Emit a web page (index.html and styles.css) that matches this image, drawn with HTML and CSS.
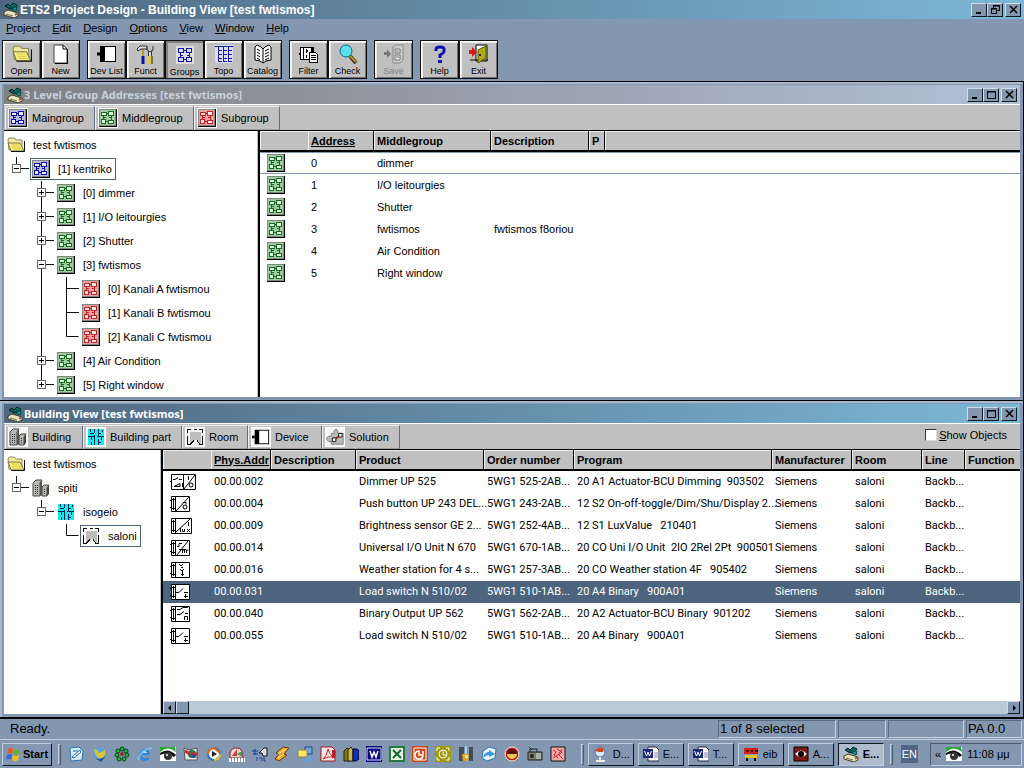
FILE: index.html
```html
<!DOCTYPE html>
<html lang="en">
<head>
<meta charset="utf-8">
<title>ETS2 Project Design - Building View [test fwtismos]</title>
<link rel="stylesheet" href="styles.css">
</head>
<body>
<svg class="defs" aria-hidden="true">
  <symbol id="app" viewBox="0 0 16 16"><path d="M1 10l4-2 10 3v3l-4 2-10-3z" fill="#e8e4c0" stroke="#403c20"/><path d="M3 12l7 2M12 12l2-1" stroke="#77735a"/><path d="M2 4l3-2 2 2 3-3 4 2-2 3-5 1z" fill="#086868" stroke="#022"/><path d="M6 5h5M9 7l4 2 1-4" fill="#18a0a0" stroke="#044"/><path d="M12 13l2-1" stroke="#c00"/></symbol>
  <symbol id="group" viewBox="0 0 18 18" shape-rendering="crispEdges"><path d="M0 0h18v18H0z" fill="#000"/><path d="M0 0h17v17H0z" fill="#808880"/><path d="M1 1h15v15H1z" fill="var(--tint)"/><path d="M2.500 3.500h5v3h-5zM9.500 2.500h5v4h-5zM2.500 10.500h4v4h-4zM9.500 11.500h5v3h-5z" fill="var(--pale)" stroke="currentColor"/><path d="M7 4.500h3M7 12.500h3M4.500 7v4M12.500 7v5M5 8.500h2M10 8.500h2" stroke="currentColor" fill="none"/></symbol>
  <symbol id="folder" viewBox="0 0 18 16"><path d="M1 3l1-2h5l2 2h6v10H2z" fill="#f4ec9c" stroke="#8c8860"/><path d="M1 6h12l4 8H4z" fill="#f8f080" stroke="#77734a"/><path d="M4 14.500h13.500V4" stroke="#111" fill="none"/><path d="M4 8h8M5 10h9M6 12h9" stroke="#d8cc40"/></symbol>
  <symbol id="building" viewBox="0 0 18 18"><path d="M1 4l3-3h6l-2 3v13H1z" fill="#b8b8b0" stroke="#444"/><path d="M8 4l2-3v15l-2 1z" fill="#555"/><path d="M10 8l2-2h5l-2 3v8h-5z" fill="#b8b8b0" stroke="#444"/><path d="M15 9l2-3v9l-2 2z" fill="#444"/><path d="M3.500 6v10M5.500 6v10M12.500 10v6" stroke="#333" stroke-dasharray="1 1"/></symbol>
  <symbol id="part" viewBox="0 0 18 18" shape-rendering="crispEdges"><path d="M1 1h16v16H1z" fill="#18e8f0"/><path d="M1 8.500h6M10 8.500h7M7.500 1v4M7.500 7v10M11.500 1v7M11.500 11v6M3 5.500h4M11 5.500h3M4.500 9v3M4.500 14v3M14.500 8v4M11 14.500h3M3.500 1v3M15.500 2v2" stroke="#024" fill="none"/></symbol>
  <symbol id="room" viewBox="0 0 18 18" shape-rendering="crispEdges"><path d="M4 4h11v12l-5-4-5 4H4z" fill="#bdbdbd"/><path d="M1.500 5V1.500H5M8 1.500h3M13 1.500h3.500V5M1.500 8v8.500H4l4-4M16.500 8v8.500H14l-3-4" fill="none" stroke="#111"/></symbol>
  <symbol id="device" viewBox="0 0 20 18"><path d="M3 1h16v16H3z" fill="#000"/><path d="M8 2h10v14H8z" fill="#fff"/><path d="M0 9h3" stroke="#000" stroke-width="3"/></symbol>
  <symbol id="solution" viewBox="0 0 20 18"><path d="M6 5h3V2l2-2 2 2v3h6v12H6v-3H3l-3-3 3-3h3z" fill="#bbb" stroke="#777"/><path d="M9 12l7-5" stroke="#c01818" stroke-width="2"/><path d="M7 10h4v4H7zM14 5h4v4h-4z" fill="#eee" stroke="#111"/></symbol>
  <symbol id="new" viewBox="0 0 20 20"><path d="M3 1h9l4 4v14H3z" fill="#fff" stroke="#444"/><path d="M12 1v4h4M16.500 5v14.500H4" fill="none" stroke="#000"/></symbol>
  <symbol id="funct" viewBox="0 0 20 20"><path d="M7 5v9" stroke="#b89838" stroke-width="2"/><path d="M1 5l3-3h7v3H5L2 7z" fill="#ddd" stroke="#333"/><path d="M14 7v6" stroke="#ddd" stroke-width="2"/><path d="M11 3v3l3 2 3-2V2M12.500 7v5M15.500 7v5" fill="none" stroke="#333"/><path d="M7 12v8" stroke="#1010a0" stroke-width="3"/><path d="M14 12v8" stroke="#f0c818" stroke-width="3"/><path d="M16 12v8" stroke="#222"/></symbol>
  <symbol id="groups" viewBox="0 0 20 20" shape-rendering="crispEdges"><path d="M1 1h18v18H1z" fill="#ddd"/><path d="M3.500 3.500h5v4h-5zM11.500 3.500h5v4h-5zM3.500 12.500h5v4h-5zM11.500 12.500h5v4h-5zM8 5.500h4M8 14.500h4M5.500 7v6M14.500 7v6M6 10.500h2M12 10.500h2" fill="none" stroke="#1010b0"/></symbol>
  <symbol id="topo" viewBox="0 0 20 20" shape-rendering="crispEdges"><path d="M1 1h18v18H1z" fill="#dcdcf4"/><path d="M1 2.500h18M4.500 3v15M9.500 3v15M14.500 3v15M5 6.500h3M5 10.500h3M5 14.500h3M10 6.500h3M10 10.500h3M10 14.500h3M15 6.500h3M15 10.500h3M15 14.500h3M5 17.500h3M10 17.500h3M15 17.500h3" stroke="#1818a8"/></symbol>
  <symbol id="catalog" viewBox="0 0 20 20"><path d="M2 3l2-2 4 2 2 2 2-2 4-2 2 2v13l-5 1-3 2-3-2-5-1z" fill="#fff" stroke="#000"/><path d="M10 5v14M4 5l3 2M4 8l3 2M4 11l3 2M4 14l3 2M12 7l4-2M12 10l4-2M12 13l4-2M12 16l4-2" stroke="#000"/></symbol>
  <symbol id="filter" viewBox="0 0 20 20" shape-rendering="crispEdges"><path d="M1.500 3.500h13v12h-13z" fill="#fff" stroke="#000"/><path d="M0 9h2v2H0zM12 4h3v4h-3z"/><path d="M4.500 3v13M7.500 5v4M8.500 6v2M7.500 11v3" stroke="#000"/><path d="M10.500 8.500h6l2 2v8h-8z" fill="#fff" stroke="#000"/><path d="M12 11.500h5M12 13.500h5M12 15.500h5" stroke="#000"/></symbol>
  <symbol id="check" viewBox="0 0 20 20"><path d="M12 12l6 7" stroke="#332" stroke-width="4"/><path d="M12 12l6 6" stroke="#b09828" stroke-width="2"/><circle cx="8" cy="7" r="6" fill="#58e0ec" stroke="#168"/></symbol>
  <symbol id="save" viewBox="0 0 20 20"><path d="M0 8h3V5l4 5-4 4v-3H0z" fill="#777"/><path d="M9 3l3-2h7v15l-3 3H9z" fill="#ccc" stroke="#888"/><path d="M11 5h5v4h-5zM11 11h5v5h-5zM12 7h3M12 13h3" stroke="#777" fill="#eee"/></symbol>
  <symbol id="help" viewBox="0 0 20 20"><path d="M6 7V5q0-2 4-2t4 2v2q0 2-4 4v3" fill="none" stroke="#1010b0" stroke-width="3"/><path d="M8 16h4v3H8z" fill="#1010b0"/></symbol>
  <symbol id="exit" viewBox="0 0 20 20"><path d="M7 1h11v16H7z" fill="#fff" stroke="#000"/><path d="M1 16h18" stroke="#000"/><path d="M9 6l8-4v12l-8 5z" fill="#b0a818" stroke="#555008"/><circle cx="11" cy="11" r="1"/><path d="M0 6h3V3l5 5-5 5v-3H0z" fill="#d81818"/></symbol>

  <symbol id="d-dim" viewBox="0 0 26 18"><path d="M1.500 1.500h24v15h-24z" fill="#fff" stroke="#000"/><g fill="none" stroke="#000"><path d="M13.500 1.500v15M0 8.500h1.500M14 16L25 2M3 6.500h2l3-2M9 6.500h3M4 13.500h6v-3zM18.500 3v4M12.500 10v4"/><circle cx="21" cy="12" r="2"/></g></symbol>
  <symbol id="d-base" viewBox="0 0 20 18"><path d="M1.500 1.500h18v15h-18z" fill="#fff" stroke="#000"/><path d="M5.500 1.500v15M0 5.500h2M0 12.500h2M3.500 3v12M2 4.500h3M2 13.500h3" stroke="#000"/></symbol>
  <symbol id="d-push" viewBox="0 0 20 18"><use href="#d-base"/><g fill="none" stroke="#000"><path d="M6 16L19 2M13 7.500h3v2"/><circle cx="15" cy="12" r="2"/></g></symbol>
  <symbol id="d-lux" viewBox="0 0 22 18"><path d="M1.500 1.500h20v15h-20z" fill="#fff" stroke="#000"/><path d="M5.500 1.500v15M3.500 3v12M2 4.500h3M2 13.500h3M6 15L20 2M18.500 5v4M10.500 11v4M12.500 12v2.500h2V12M17 12l3 3M20 12l-3 3" fill="none" stroke="#000"/></symbol>
  <symbol id="d-uni" viewBox="0 0 20 18"><use href="#d-base"/><path d="M7 16L18 2M7 7.500h2v-3h3M12.500 14v-3h2v3M16.500 14v-3h2M9 10.500h7" fill="none" stroke="#000"/></symbol>
  <symbol id="d-wea" viewBox="0 0 20 18"><use href="#d-base"/><path d="M9 3l2 2 2-2M11 6.500h2M10 8l2 2 2-2M12.500 10v5M11 13.500h3" fill="none" stroke="#000"/></symbol>
  <symbol id="d-load" viewBox="0 0 20 18"><use href="#d-base"/><path d="M6 9.500h3l4-4M14 9.500h4M15.500 11v4M14 13.500h4" fill="none" stroke="#000"/></symbol>
  <symbol id="d-bin" viewBox="0 0 20 18"><use href="#d-base"/><path d="M7 4.500h3l3-2h5M7 9.500h3l4-3M15 8.500h3M14.500 15v-3.500h3V15" fill="none" stroke="#000"/></symbol>

  <symbol id="t-root" viewBox="0 0 25 24" shape-rendering="crispEdges"><path d="M11.500 0v7M16 11.500h8" stroke="#111"/><path d="M7.500 7.500h8v8h-8z" fill="#fff" stroke="#666"/><path d="M9 11.500h5" stroke="#000"/></symbol>
  <symbol id="t-plus" viewBox="0 0 25 24" shape-rendering="crispEdges"><path d="M11.500 0v24M16 11.500h8" stroke="#111"/><path d="M7.500 7.500h8v8h-8z" fill="#fff" stroke="#666"/><path d="M9 11.500h5M11.500 9v5" stroke="#000"/></symbol>
  <symbol id="t-minus" viewBox="0 0 25 24" shape-rendering="crispEdges"><path d="M11.500 0v24M16 11.500h8" stroke="#111"/><path d="M7.500 7.500h8v8h-8z" fill="#fff" stroke="#666"/><path d="M9 11.500h5" stroke="#000"/></symbol>
  <symbol id="t-last" viewBox="0 0 25 24" shape-rendering="crispEdges"><path d="M11.500 0v7M16 11.500h8" stroke="#111"/><path d="M7.500 7.500h8v8h-8z" fill="#fff" stroke="#666"/><path d="M9 11.500h5M11.500 9v5" stroke="#000"/></symbol>
  <symbol id="t-bar" viewBox="0 0 25 24"><path d="M11.500 0v24" stroke="#111"/></symbol>
  <symbol id="t-tee" viewBox="0 0 25 24"><path d="M11.500 0v24M12 11.500h12" stroke="#111"/></symbol>
  <symbol id="t-end" viewBox="0 0 25 24"><path d="M11.500 0v11.500h12" stroke="#111" fill="none"/></symbol>

  <symbol id="w-min" viewBox="0 0 11 10"><path d="M2 8h5" stroke="#000" stroke-width="2"/></symbol>
  <symbol id="w-max" viewBox="0 0 11 10"><path d="M1.500 1.500h8v7h-8zM1 2h9" fill="none" stroke="#000"/></symbol>
  <symbol id="w-res" viewBox="0 0 11 10"><path d="M3.500 3V.500h6v5H7M3 1h7M1.500 3.500h5v5h-5zM1 4h6" fill="none" stroke="#000"/></symbol>
  <symbol id="w-close" viewBox="0 0 11 10"><path d="M2 1l7 7M9 1L2 8" stroke="#000" stroke-width="1.500"/></symbol>

  <symbol id="winflag" viewBox="0 0 16 16"><path d="M3 3q3-2 5 0L7 8Q4 6 2 8z" fill="#e85828"/><path d="M9 3q3 2 6 0l-1 5q-3 2-6 0z" fill="#68b030"/><path d="M2 9q2-2 5 0l-1 5q-3-2-5 0z" fill="#3868d8"/><path d="M8 9q3 2 6 0l-1 5q-3 2-6 0z" fill="#f0c020"/></symbol>
  <symbol id="eye" viewBox="0 0 16 16"><path d="M0 1h16v14H0z" fill="#fff"/><path d="M0 6q8-7 16 0l-1-5H0z" fill="#28a838"/><path d="M0 7q8-6 16 2l-2 2Q7 5 0 9z" fill="#111"/><circle cx="8" cy="10" r="4" fill="#333"/><circle cx="7" cy="9" r="1" fill="#fff"/></symbol>
  <symbol id="word" viewBox="0 0 16 16"><path d="M5 1h8l3 3v11H5z" fill="#fff" stroke="#224"/><path d="M11 7h4M11 9h4M11 11h4" stroke="#88a"/><path d="M0 3h10v9H0z" fill="#18287c"/><path d="M1.500 5l2 5L5 6l1.500 4 2-5" fill="none" stroke="#fff"/></symbol>
</svg>

<header class="titlebar active main">
  <svg class="i16"><use href="#app"/></svg>
  <h1>ETS2 Project Design - Building View [test fwtismos]</h1>
  <div class="controls">
    <button aria-label="Minimize"><svg><use href="#w-min"/></svg></button><button aria-label="Restore"><svg><use href="#w-res"/></svg></button><button class="close" aria-label="Close"><svg><use href="#w-close"/></svg></button>
  </div>
</header>
<nav class="menu">
  <a href="#"><u>P</u>roject</a><a href="#"><u>E</u>dit</a><a href="#"><u>D</u>esign</a><a href="#"><u>O</u>ptions</a><a href="#"><u>V</u>iew</a><a href="#"><u>W</u>indow</a><a href="#"><u>H</u>elp</a>
</nav>
<div class="toolbar">
  <div><button><svg><use href="#folder"/></svg>Open</button><button><svg><use href="#new"/></svg>New</button></div>
  <div><button><svg><use href="#device"/></svg>Dev List</button><button><svg><use href="#funct"/></svg>Funct</button><button class="pressed"><svg><use href="#groups"/></svg>Groups</button><button><svg><use href="#topo"/></svg>Topo</button><button><svg><use href="#catalog"/></svg>Catalog</button></div>
  <div><button><svg><use href="#filter"/></svg>Filter</button><button><svg><use href="#check"/></svg>Check</button></div>
  <div><button disabled><svg><use href="#save"/></svg>Save</button></div>
  <div><button><svg><use href="#help"/></svg>Help</button><button><svg><use href="#exit"/></svg>Exit</button></div>
</div>

<main class="workspace">
  <section class="window">
    <header class="titlebar inactive">
      <svg class="i16"><use href="#app"/></svg>
      <h2>3 Level Group Addresses [test fwtismos]</h2>
      <div class="controls"><button aria-label="Minimize"><svg><use href="#w-min"/></svg></button><button aria-label="Maximize"><svg><use href="#w-max"/></svg></button><button class="close" aria-label="Close"><svg><use href="#w-close"/></svg></button></div>
    </header>
    <div class="subbar">
      <button class="w90"><svg class="blue"><use href="#group"/></svg>Maingroup</button>
      <button class="w98"><svg class="green"><use href="#group"/></svg>Middlegroup</button>
      <button class="w86"><svg class="red"><use href="#group"/></svg>Subgroup</button>
    </div>
    <div class="panes groups">
      <ul class="tree">
        <li><span class="node"><svg><use href="#folder"/></svg>test fwtismos</span></li>
        <li><svg class="g"><use href="#t-root"/></svg><span class="node sel"><svg class="blue"><use href="#group"/></svg>[1] kentriko</span></li>
        <li><i></i><svg class="g"><use href="#t-plus"/></svg><span class="node"><svg class="green"><use href="#group"/></svg>[0] dimmer</span></li>
        <li><i></i><svg class="g"><use href="#t-plus"/></svg><span class="node"><svg class="green"><use href="#group"/></svg>[1] I/O leitourgies</span></li>
        <li><i></i><svg class="g"><use href="#t-plus"/></svg><span class="node"><svg class="green"><use href="#group"/></svg>[2] Shutter</span></li>
        <li><i></i><svg class="g"><use href="#t-minus"/></svg><span class="node"><svg class="green"><use href="#group"/></svg>[3] fwtismos</span></li>
        <li><i></i><svg class="g"><use href="#t-bar"/></svg><svg class="g"><use href="#t-tee"/></svg><span class="node"><svg class="red"><use href="#group"/></svg>[0] Kanali A fwtismou</span></li>
        <li><i></i><svg class="g"><use href="#t-bar"/></svg><svg class="g"><use href="#t-tee"/></svg><span class="node"><svg class="red"><use href="#group"/></svg>[1] Kanali B fwtismou</span></li>
        <li><i></i><svg class="g"><use href="#t-bar"/></svg><svg class="g"><use href="#t-end"/></svg><span class="node"><svg class="red"><use href="#group"/></svg>[2] Kanali C fwtismou</span></li>
        <li><i></i><svg class="g"><use href="#t-plus"/></svg><span class="node"><svg class="green"><use href="#group"/></svg>[4] Air Condition</span></li>
        <li><i></i><svg class="g"><use href="#t-last"/></svg><span class="node"><svg class="green"><use href="#group"/></svg>[5] Right window</span></li>
      </ul>
      <div class="list">
        <table>
          <colgroup><col class="c48"><col class="c66"><col class="c117"><col class="c97"><col class="c16"><col></colgroup>
          <thead><tr><th class="open"></th><th><u>Address</u></th><th>Middlegroup</th><th>Description</th><th>P</th><th class="open"></th></tr></thead>
          <tbody>
            <tr class="focus"><td><svg class="green"><use href="#group"/></svg></td><td>0</td><td>dimmer</td><td></td><td></td><td></td></tr>
            <tr><td><svg class="green"><use href="#group"/></svg></td><td>1</td><td>I/O leitourgies</td><td></td><td></td><td></td></tr>
            <tr><td><svg class="green"><use href="#group"/></svg></td><td>2</td><td>Shutter</td><td></td><td></td><td></td></tr>
            <tr><td><svg class="green"><use href="#group"/></svg></td><td>3</td><td>fwtismos</td><td>fwtismos f8oriou</td><td></td><td></td></tr>
            <tr><td><svg class="green"><use href="#group"/></svg></td><td>4</td><td>Air Condition</td><td></td><td></td><td></td></tr>
            <tr><td><svg class="green"><use href="#group"/></svg></td><td>5</td><td>Right window</td><td></td><td></td><td></td></tr>
          </tbody>
        </table>
      </div>
    </div>
  </section>

  <section class="window">
    <header class="titlebar active">
      <svg class="i16"><use href="#app"/></svg>
      <h2>Building View [test fwtismos]</h2>
      <div class="controls"><button aria-label="Minimize"><svg><use href="#w-min"/></svg></button><button aria-label="Maximize"><svg><use href="#w-max"/></svg></button><button class="close" aria-label="Close"><svg><use href="#w-close"/></svg></button></div>
    </header>
    <div class="subbar">
      <button class="w78"><svg><use href="#building"/></svg>Building</button>
      <button class="w98"><svg><use href="#part"/></svg>Building part</button>
      <button class="w66"><svg><use href="#room"/></svg>Room</button>
      <button class="w74"><svg><use href="#device"/></svg>Device</button>
      <button class="w78"><svg><use href="#solution"/></svg>Solution</button>
      <label class="show"><input type="checkbox"><span><u>S</u>how Objects</span></label>
    </div>
    <div class="panes building">
      <ul class="tree">
        <li><span class="node"><svg><use href="#folder"/></svg>test fwtismos</span></li>
        <li><svg class="g"><use href="#t-root"/></svg><span class="node"><svg><use href="#building"/></svg>spiti</span></li>
        <li><i></i><svg class="g"><use href="#t-root"/></svg><span class="node"><svg><use href="#part"/></svg>isogeio</span></li>
        <li><i></i><i></i><svg class="g"><use href="#t-end"/></svg><span class="node sel"><svg><use href="#room"/></svg>saloni</span></li>
      </ul>
      <div class="list">
        <table>
          <colgroup><col class="c48"><col class="c60"><col class="c85"><col class="c128"><col class="c90"><col class="c198"><col class="c80"><col class="c70"><col class="c43"><col></colgroup>
          <thead><tr><th class="open"></th><th><u>Phys.Addr</u></th><th>Description</th><th>Product</th><th>Order number</th><th>Program</th><th>Manufacturer</th><th>Room</th><th>Line</th><th class="open">Function</th></tr></thead>
          <tbody>
            <tr><td><svg class="d26"><use href="#d-dim"/></svg></td><td>00.00.002</td><td></td><td>Dimmer UP 525</td><td>5WG1 525-2AB...</td><td>20 A1 Actuator-BCU Dimming  903502</td><td>Siemens</td><td>saloni</td><td>Backb...</td><td></td></tr>
            <tr><td><svg class="d20"><use href="#d-push"/></svg></td><td>00.00.004</td><td></td><td>Push button UP 243 DEL...</td><td>5WG1 243-2AB...</td><td>12 S2 On-off-toggle/Dim/Shu/Display 2...</td><td>Siemens</td><td>saloni</td><td>Backb...</td><td></td></tr>
            <tr><td><svg class="d22"><use href="#d-lux"/></svg></td><td>00.00.009</td><td></td><td>Brightness sensor GE 2...</td><td>5WG1 252-4AB...</td><td>12 S1 LuxValue   210401</td><td>Siemens</td><td>saloni</td><td>Backb...</td><td></td></tr>
            <tr><td><svg class="d20"><use href="#d-uni"/></svg></td><td>00.00.014</td><td></td><td>Universal I/O Unit N 670</td><td>5WG1 670-1AB...</td><td>20 CO Uni I/O Unit  2IO 2Rel 2Pt  900501</td><td>Siemens</td><td>saloni</td><td>Backb...</td><td></td></tr>
            <tr><td><svg class="d20"><use href="#d-wea"/></svg></td><td>00.00.016</td><td></td><td>Weather station for 4 s...</td><td>5WG1 257-3AB...</td><td>20 CO Weather station 4F   905402</td><td>Siemens</td><td>saloni</td><td>Backb...</td><td></td></tr>
            <tr class="picked"><td><svg class="d20"><use href="#d-load"/></svg></td><td>00.00.031</td><td></td><td>Load switch N 510/02</td><td>5WG1 510-1AB...</td><td>20 A4 Binary   900A01</td><td>Siemens</td><td>saloni</td><td>Backb...</td><td></td></tr>
            <tr><td><svg class="d20"><use href="#d-bin"/></svg></td><td>00.00.040</td><td></td><td>Binary Output UP 562</td><td>5WG1 562-2AB...</td><td>20 A2 Actuator-BCU Binary  901202</td><td>Siemens</td><td>saloni</td><td>Backb...</td><td></td></tr>
            <tr><td><svg class="d20"><use href="#d-load"/></svg></td><td>00.00.055</td><td></td><td>Load switch N 510/02</td><td>5WG1 510-1AB...</td><td>20 A4 Binary   900A01</td><td>Siemens</td><td>saloni</td><td>Backb...</td><td></td></tr>
          </tbody>
        </table>
        <div class="scroll"><button aria-label="Scroll left"><svg viewBox="0 0 8 8"><path d="M5 1v6L2 4z"/></svg></button><span class="thumb"></span><span class="track"></span><button aria-label="Scroll right"><svg viewBox="0 0 8 8"><path d="M3 1v6l3-3z"/></svg></button></div>
      </div>
    </div>
  </section>
</main>

<footer class="status"><span class="ready">Ready.</span><span class="cell s118">1 of 8 selected</span><span class="cell s48"></span><span class="cell s76"></span><span class="cell s56">PA 0.0</span></footer>

<div class="taskbar">
  <button class="start"><svg class="i16"><use href="#winflag"/></svg>Start</button>
  <span class="grip"></span>
  <div class="quick">
    <svg viewBox="0 0 16 16"><path d="M2 2l9-1 4 4-1 9-11 1z" fill="#d8f0fc" stroke="#2878a8"/><path d="M5 5h5M4 11l8-7 1 2-7 6z" fill="#fff" stroke="#1868b0"/></svg>
    <svg viewBox="0 0 16 16"><circle cx="8" cy="7" r="6" fill="#58a0e0"/><path d="M3 3q4 0 5 4l6-3q1 7-5 9Q4 10 3 3z" fill="#d8c838"/><path d="M1 10q6 6 14 0l-5 6z" fill="#205898"/></svg>
    <svg viewBox="0 0 16 16"><g fill="#28b838" stroke="#042"><circle cx="8" cy="3" r="2"/><circle cx="12" cy="5" r="2"/><circle cx="13" cy="9" r="2"/><circle cx="10" cy="13" r="2"/><circle cx="5" cy="13" r="2"/><circle cx="3" cy="9" r="2"/><circle cx="4" cy="5" r="2"/></g><circle cx="8" cy="8" r="2" fill="#a02020"/></svg>
    <svg viewBox="0 0 16 16"><path d="M13 9H4q1 4 5 3h4q-2 3-6 3-5-1-5-6 1-5 6-6 5 0 5 6z" fill="#2888e0"/><path d="M5 7h5q-2-4-5 0z" fill="#c8e4f8"/><path d="M1 14Q4 3 15 2" fill="none" stroke="#80c8f8" stroke-width="1.500"/></svg>
    <svg><use href="#eye"/></svg>
    <svg viewBox="0 0 16 16"><path d="M1 2l5 2 8-2v12H2z" fill="#e8e8e0" stroke="#555"/><circle cx="9" cy="8" r="4" fill="#207850"/><path d="M8 8h7M2 5l5 3" stroke="#d02828" stroke-width="3"/><circle cx="11" cy="10" r="2" fill="#2048b0"/></svg>
    <svg viewBox="0 0 16 16"><circle cx="8" cy="8" r="6" fill="#fff" stroke="#2878c8" stroke-width="2"/><path d="M2 8a6 6 0 0 1 6-6l6 5" fill="none" stroke="#e86820" stroke-width="2"/><path d="M8 14q6 0 6-6" fill="none" stroke="#e8c020" stroke-width="2"/><path d="M6 5l5 3-5 3z" fill="#222"/></svg>
    <svg viewBox="0 0 16 16"><path d="M1 12V7q2-6 7-5 6 0 6 10z" fill="#e8d8d0" stroke="#822"/><path d="M3 10l5-7v7z" fill="#d83838"/><path d="M8 8l5-3v6z" fill="#38a050"/><path d="M0 13h16M0 15h16" stroke="#fff" stroke-width="2" stroke-dasharray="2 1"/></svg>
    <svg viewBox="0 0 16 16"><path d="M0 5h6M3 3v6M1 8h5" stroke="#124090"/><path d="M7 7l5-5h3v8h-4l-1-3z" fill="#ddd" stroke="#112"/><path d="M5 11v4M7 12h3v3M12 11v4h2" stroke="#1840a0" fill="none"/></svg>
    <svg viewBox="0 0 16 16"><path d="M9 1l6 1-5 6 3 1-8 6-4-2 4-5-3-1z" fill="#f4a828" stroke="#643c08"/><path d="M4 8l8-5M4 12l6-4" stroke="#fff4a0"/></svg>
    <svg viewBox="0 0 16 16"><path d="M8 1h7v7H8z" fill="#70a8e8" stroke="#247"/><path d="M1 4h9v7H1z" fill="#f8e868" stroke="#885"/><path d="M9 14h6M13 9v5" stroke="#58a8f0" stroke-width="2"/></svg>
    <svg viewBox="0 0 16 16"><path d="M1 1h11l3 3v11H1z" fill="#f4e8e8" stroke="#a01818"/><path d="M12 4h3v8h-3z" fill="#b81828"/><path d="M3 13q4-3 5-10 1 5 5 8-5-1-10 2z" fill="none" stroke="#d02020"/></svg>
    <svg viewBox="0 0 16 16"><path d="M1 5l3-3 3 2v11H1z" fill="#807818" stroke="#220"/><path d="M5 4l3-3 2 3v11H5z" fill="#c8b850" stroke="#220"/><path d="M10 3h4l2 2v8l-3 2h-3z" fill="#1830b0" stroke="#003"/></svg>
    <svg viewBox="0 0 16 16"><path d="M0 0h16v16H0z" fill="#08087c"/><path d="M1 2h14v12H1z" fill="none" stroke="#ddf"/><path d="M4 5l2 6 2-5 2 5 2-6" fill="none" stroke="#fff" stroke-width="1.500"/></svg>
    <svg viewBox="0 0 16 16"><path d="M0 0h16v16H0z" fill="#287840"/><path d="M2 2h12v12H2z" fill="#e8f4e0"/><path d="M4 4l8 8M12 4l-8 8" stroke="#186830" stroke-width="2"/></svg>
    <svg viewBox="0 0 16 16"><path d="M0 0h16v16H0z" fill="#c84818"/><path d="M2 2h12v12H2z" fill="none" stroke="#fff"/><path d="M11 10a4 4 0 1 1-4-5v4h4V5" fill="none" stroke="#fff" stroke-width="1.500"/></svg>
    <svg viewBox="0 0 16 16"><path d="M0 0h16v16H0z" fill="#a09808"/><path d="M2 5V2h3M11 2h3v3M14 11v3h-3M5 14H2v-3M8 5v4h3" fill="none" stroke="#fff"/><circle cx="8" cy="8" r="4" fill="none" stroke="#fff"/></svg>
    <svg viewBox="0 0 16 16"><path d="M1 1h5v14H1zM11 1h4v14h-4z" fill="#444c58"/><path d="M7 0h2v8H7z" fill="#a8d0f0"/><path d="M4 8h7l-1 7H5z" fill="#e8a020"/><path d="M7 9h3v3H7z" fill="#fff08c"/></svg>
    <svg viewBox="0 0 16 16"><path d="M2 5l6-4 7 2-1 9-8 3-5-3z" fill="#e8f4fc" stroke="#2878b8"/><path d="M2 12q1-6 6-6V4l6 4-6 3V9q-3 0-6 3z" fill="#3898e0"/></svg>
    <svg viewBox="0 0 16 16"><circle cx="8" cy="8" r="7" fill="#b82020" stroke="#eed"/><path d="M3 8a5 5 0 0 1 10 0z" fill="#601010"/><path d="M3 8h10a5 5 0 0 1-10 0z" fill="#f0c850"/></svg>
    <svg viewBox="0 0 16 16"><path d="M1 6h14v8H1z" fill="#777c70" stroke="#222"/><path d="M3 6V3h7v3M2 1l3 3" fill="none" stroke="#222"/><circle cx="5" cy="10" r="2" fill="#222"/><path d="M9 8h5M9 10h5M9 12h5" stroke="#ddd"/></svg>
    <svg viewBox="0 0 16 16"><path d="M1 1h14v14H1z" fill="#f0a8a8" stroke="#111"/><path d="M3 4l3 2-2 3 4 3M7 3l5 3-3 3 4 4M12 3l-4 6-5 3" fill="none" stroke="#c82838"/></svg>
  </div>
  <span class="grip"></span>
  <div class="tasks">
    <button><svg class="i16" viewBox="0 0 16 16"><circle cx="7" cy="6" r="5" fill="#d8eaf8" stroke="#4878a8"/><path d="M2 5q4-6 9-2l-1 3H6z" fill="#d04818"/><path d="M7 11v3M3 15h9" stroke="#eee" stroke-width="2"/></svg>D...</button>
    <button><svg class="i16"><use href="#word"/></svg>E...</button>
    <button><svg class="i16"><use href="#word"/></svg>T...</button>
    <button><svg class="i16" viewBox="0 0 16 16"><path d="M1 2h14v6H1z" fill="#d02020"/><path d="M3 5h3M8 5h2M12 5h3" stroke="#400" stroke-width="2"/><path d="M2 9h12v3H2z" fill="#e8c020"/><path d="M4 12v3M12 12v3" stroke="#111" stroke-width="2"/></svg>eib</button>
    <button><svg class="i16" viewBox="0 0 16 16"><path d="M1 1h14v14H1z" fill="#801818" stroke="#000"/><path d="M2 8q6-7 12 0-6 6-12 0z" fill="#eee"/><circle cx="8" cy="8" r="3"/></svg>A...</button>
    <button class="on"><svg class="i16"><use href="#app"/></svg>E...</button>
  </div>
  <span class="grip"></span>
  <span class="lang">EN</span>
  <div class="tray"><span>«</span><svg class="i16"><use href="#eye"/></svg><time>11:08 μμ</time></div>
</div>
</body>
</html>
```
FILE: styles.css
```css
* { box-sizing: border-box; }
:root {
  --slate: #8497b0;
  --light: #c0cede;
  --dark: #4c5c70;
  --face: #c0c0c0;
  --pick: #4c647e;
}
body {
  margin: 0;
  min-height: 100vh;
  display: flex;
  flex-direction: column;
  background: var(--slate);
  color: #000;
  font: 11px/14px "Liberation Sans", Arial, sans-serif;
}
button { font: inherit; color: inherit; margin: 0; padding: 0; border-radius: 0; }
svg { display: block; flex: none; width: 18px; height: 18px; }
.defs { position: absolute; width: 0; height: 0; }
.i16 { width: 16px; height: 16px; }
.blue { color: #1010a8; --tint: #b8b8e0; --pale: #f0f0ff; }
.green { color: #186828; --tint: #a0cca0; --pale: #e0ffe0; }
.red { color: #c02028; --tint: #f0a0a0; --pale: #ffe8e8; }

.titlebar { display: flex; align-items: center; height: 19px; padding: 0 3px 0 3px; color: #fff; }
.titlebar h1, .titlebar h2 { margin: 0 0 0 1px; font: bold 11px/18px "Noto Sans", sans-serif; white-space: nowrap; }
.titlebar.main h1 { font: bold 12px/18px "Liberation Sans", sans-serif; }
.titlebar.active { background: linear-gradient(90deg, #4f6780, #7cb8d6); }
.titlebar.inactive { background: linear-gradient(90deg, #808084, #b2c0d8); color: #c8d0dc; }
.controls { display: flex; margin-left: auto; }
.controls button, .scroll button, .thumb {
  display: grid;
  place-items: center;
  width: 16px;
  height: 14px;
  background: var(--slate);
  border: 1px solid;
  border-color: #d0dcea #101820 #101820 #d0dcea;
}
.controls .close { margin-left: 2px; }
.controls svg { width: 11px; height: 10px; }

.menu { display: flex; gap: 12px; height: 20px; padding: 1px 6px 0; }
.menu a { color: #000; text-decoration: none; line-height: 16px; }

.toolbar { display: flex; gap: 7px; padding: 1px 2px 2px; }
.toolbar div { display: flex; }
.toolbar button {
  display: flex;
  flex-direction: column;
  align-items: center;
  justify-content: space-between;
  width: 39px;
  height: 39px;
  padding: 3px 0 1px;
  background: var(--face);
  border: 1px solid #111;
  box-shadow: inset 1px 1px #fff, inset 2px 2px #e8e8e8, inset -1px -1px #707070;
  font-size: 9px;
  line-height: 11px;
  white-space: nowrap;
}
.toolbar svg { width: 20px; height: 20px; }
.toolbar .pressed { background: #b8b8b8; box-shadow: inset 2px 2px #808080; padding: 4px 0 0; }
.toolbar button:disabled { color: #808080; }

.workspace { flex: 1; display: flex; flex-direction: column; border-bottom: 2px solid #000; }
.window {
  flex: 1 0 0;
  display: flex;
  flex-direction: column;
  padding: 3px 3px 3px 4px;
  border: solid #000;
  border-width: 1px 1px 0 0;
  box-shadow: inset 2px 2px #a8b8cc;
}
.subbar { display: flex; height: 27px; padding: 1px 1px 0; background: var(--face); border-top: 1px solid #fff; border-bottom: 1px solid #000; }
.subbar button {
  display: flex;
  align-items: center;
  gap: 5px;
  padding: 0 3px;
  background: var(--face);
  border: 1px solid;
  border-color: #eee #607080 #a0a0a0 #eee;
  white-space: nowrap;
}
.subbar button svg { outline: 1px solid #fff; background: #f4f4f4; }
.w66 { width: 66px; }
.w74 { width: 74px; }
.w78 { width: 78px; }
.w86 { width: 86px; }
.w90 { width: 90px; }
.w98 { width: 99px; }
.show { display: flex; align-items: center; gap: 2px; height: 20px; margin-left: auto; padding-right: 12px; }
.show input { appearance: none; width: 12px; height: 12px; margin: 0; background: #fff; border: 1px solid; border-color: #333 #ddd #ddd #333; }

.panes { flex: 1; display: grid; background: #fff; }
.groups { grid-template-columns: 254px 1fr; }
.building { grid-template-columns: 157px 1fr; }
.tree { margin: 0; padding: 2px 0 0 1px; list-style: none; border-right: 1px solid #b8c0c8; }
.tree li { display: flex; align-items: center; height: 24px; }
.tree i, .tree .g { width: 25px; height: 24px; flex: none; }
.node { display: flex; align-items: center; gap: 8px; height: 22px; padding: 0 3px 0 1px; border: 1px solid transparent; white-space: nowrap; }
.node.sel { border-color: var(--pick); }
.list { display: flex; flex-direction: column; border-left: 2px solid #000; min-width: 0; overflow: hidden; }

table { width: 100%; table-layout: fixed; border-collapse: separate; border-spacing: 0; }
th, td { padding: 0 0 0 3px; text-align: left; white-space: pre; }
th {
  height: 21px;
  background: var(--face);
  font-size: 11px;
  font-weight: bold;
  border-right: 1px solid #000;
  border-bottom: 2px solid #000;
  box-shadow: inset 1px 1px #eee;
}
th.open { border-right: 0; }
td { height: 22px; }
.building td { font-family: Roboto, "Liberation Sans", sans-serif; }
td:first-child { padding-left: 7px; }
.focus td { border: solid var(--slate); border-width: 1px 0; }
.picked td { background: var(--pick); color: #fff; }
.d20 { width: 20px; }
.d22 { width: 22px; }
.d26 { width: 26px; }
.c16 { width: 16px; }
.c43 { width: 43px; }
.c48 { width: 48px; }
.c60 { width: 60px; }
.c66 { width: 66px; }
.c70 { width: 70px; }
.c80 { width: 80px; }
.c85 { width: 85px; }
.c90 { width: 90px; }
.c97 { width: 98px; }
.c117 { width: 117px; }
.c128 { width: 128px; }
.c198 { width: 198px; }

.scroll { display: flex; height: 13px; margin-top: auto; background: #bccad8; }
.scroll button, .thumb { width: 13px; height: 13px; }
.scroll svg { width: 8px; height: 8px; }
.track { flex: 1; }

.status { display: flex; gap: 2px; height: 20px; padding: 1px 2px 1px 10px; font-size: 13px; line-height: 17px; }
.ready { flex: 1; }
.cell { padding: 0 1px; border: 1px solid; border-color: #5c6c84 #c8d4e4 #c8d4e4 #5c6c84; line-height: 15px; white-space: nowrap; }
.s48 { width: 48px; }
.s56 { width: 56px; }
.s76 { width: 76px; }
.s118 { width: 118px; }

.taskbar { display: flex; align-items: center; gap: 6px; height: 29px; padding: 0 2px; border-top: 1px solid var(--light); }
.taskbar button {
  display: flex;
  align-items: center;
  gap: 4px;
  height: 23px;
  padding: 0 4px;
  background: var(--slate);
  border: 1px solid;
  border-color: var(--light) #101820 #101820 var(--light);
  white-space: nowrap;
}
.taskbar .start { gap: 2px; width: 50px; padding: 0 2px; font-weight: bold; }
.grip { width: 3px; height: 21px; border: 1px solid; border-color: var(--light) var(--dark) var(--dark) var(--light); }
.quick { flex: 1; display: flex; justify-content: space-between; padding: 0 9px 0 1px; }
.quick svg { width: 16px; height: 16px; }
.tasks { display: flex; gap: 4px; margin-left: -2px; }
.tasks button { width: 46px; }
.tasks .on { background: #b0bccc; border-color: #101820 var(--light) var(--light) #101820; font-weight: bold; }
.lang { margin: 0 6px 0 2px; padding: 2px 1px; background: #506684; color: #fff; }
.tray { display: flex; align-items: center; gap: 5px; width: 92px; height: 23px; padding: 0 4px; border: 1px solid; border-color: var(--dark) var(--light) var(--light) var(--dark); white-space: nowrap; }
```
